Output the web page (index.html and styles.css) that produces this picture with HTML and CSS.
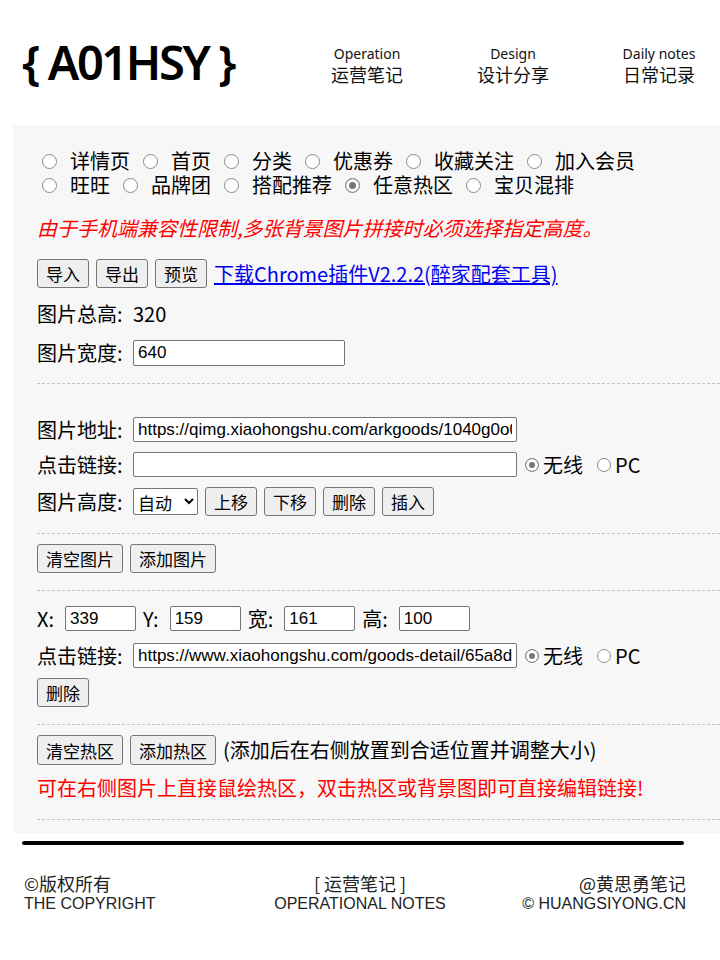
FILE: index.html
```html
<!DOCTYPE html>
<html lang="zh-CN">

<head>
  <meta charset="UTF-8">
  <meta name="viewport" content="width=device-width, initial-scale=1.0">
  <title>A01HSY - 热区工具</title>
  <link rel="stylesheet" href="styles.css">
</head>

<body>
  <header class="top">
    <div class="logo">{ A01HSY }</div>
    <nav class="nav">
      <a href="#"><span class="en">Operation</span><span class="cn">运营笔记</span></a>
      <a href="#"><span class="en">Design</span><span class="cn">设计分享</span></a>
      <a href="#"><span class="en">Daily notes</span><span class="cn">日常记录</span></a>
    </nav>
  </header>

  <main class="panel">
    <div class="types">
      <label class="opt"><input type="radio" name="type">详情页</label>
      <label class="opt"><input type="radio" name="type">首页</label>
      <label class="opt"><input type="radio" name="type">分类</label>
      <label class="opt"><input type="radio" name="type">优惠券</label>
      <label class="opt"><input type="radio" name="type">收藏关注</label>
      <label class="opt"><input type="radio" name="type">加入会员</label>
    </div>
    <div class="types">
      <label class="opt"><input type="radio" name="type">旺旺</label>
      <label class="opt"><input type="radio" name="type">品牌团</label>
      <label class="opt"><input type="radio" name="type">搭配推荐</label>
      <label class="opt"><input type="radio" name="type" checked>任意热区</label>
      <label class="opt"><input type="radio" name="type">宝贝混排</label>
    </div>

    <p class="note">由于手机端兼容性限制,多张背景图片拼接时必须选择指定高度。</p>

    <div class="row tools">
      <button>导入</button>
      <button>导出</button>
      <button>预览</button>
      <a class="plugin" href="#">下载Chrome插件V2.2.2(醉家配套工具)</a>
    </div>

    <div class="row info">
      <span class="label">图片总高:</span><span>320</span>
    </div>
    <div class="row info">
      <span class="label">图片宽度:</span><input class="field short" type="text" value="640">
    </div>

    <hr class="sep">

    <div class="row first">
      <span class="label">图片地址:</span>
      <input class="field" type="text" value="https://qimg.xiaohongshu.com/arkgoods/1040g0o031a2b3c4d5e6">
    </div>
    <div class="row">
      <span class="label">点击链接:</span>
      <input class="field" type="text" value="">
      <label class="mode"><input type="radio" name="m1" checked>无线</label>
      <label class="mode"><input type="radio" name="m1">PC</label>
    </div>
    <div class="row">
      <span class="label">图片高度:</span>
      <select class="pick">
        <option>自动</option>
      </select>
      <div class="btns">
        <button>上移</button>
        <button>下移</button>
        <button>删除</button>
        <button>插入</button>
      </div>
    </div>

    <hr class="sep">

    <div class="row btns">
      <button>清空图片</button>
      <button>添加图片</button>
    </div>

    <hr class="sep">

    <div class="row coords">
      <span>X:</span><input class="field num" type="text" value="339">
      <span>Y:</span><input class="field num" type="text" value="159">
      <span>宽:</span><input class="field num" type="text" value="161">
      <span>高:</span><input class="field num" type="text" value="100">
    </div>
    <div class="row wide">
      <span class="label">点击链接:</span>
      <input class="field" type="text" value="https://www.xiaohongshu.com/goods-detail/65a8d5f3e4b0a1">
      <label class="mode"><input type="radio" name="m2" checked>无线</label>
      <label class="mode"><input type="radio" name="m2">PC</label>
    </div>
    <div class="row">
      <button>删除</button>
    </div>

    <hr class="sep">

    <div class="row btns">
      <button class="tall">清空热区</button>
      <button class="tall">添加热区</button>
      <span>(添加后在右侧放置到合适位置并调整大小)</span>
    </div>
    <p class="tip">可在右侧图片上直接鼠绘热区，双击热区或背景图即可直接编辑链接!</p>

    <hr class="sep last">
  </main>

  <div class="bar"></div>

  <footer class="foot">
    <div class="col">
      <span class="cn">©版权所有</span>
      <span class="en">THE COPYRIGHT</span>
    </div>
    <div class="col mid">
      <span class="cn">[ 运营笔记 ]</span>
      <span class="en">OPERATIONAL NOTES</span>
    </div>
    <div class="col end">
      <span class="cn">@黄思勇笔记</span>
      <span class="en">© HUANGSIYONG.CN</span>
    </div>
  </footer>
</body>

</html>
```

FILE: styles.css
```css
body {
  margin: 0;
  font-family: "Noto Sans CJK SC", sans-serif;
  background: #fff;
  color: #000;
}

/* header */
.top {
  display: flex;
  align-items: center;
  height: 125px;
  padding: 0 1px 0 22px;
}

.logo {
  font-family: "Noto Sans", sans-serif;
  font-size: 47px;
  font-weight: 600;
  letter-spacing: -2.4px;
  line-height: 1;
}

.nav {
  display: flex;
  gap: 26px;
  margin-left: auto;
  margin-top: 5px;
}

.nav a {
  display: flex;
  flex-direction: column;
  align-items: center;
  width: 120px;
  color: #111;
  text-decoration: none;
}

.nav .en {
  font-family: "Noto Sans", sans-serif;
  font-size: 14px;
  line-height: 18px;
}

.nav .cn {
  font-size: 18px;
  line-height: 22px;
}

/* panel */
.panel {
  margin-left: 13px;
  padding: 24px 0 13px 24px;
  background: #f7f7f7;
  font-size: 20px;
  line-height: 24px;
}

.types {
  display: flex;
}

.opt {
  display: inline-flex;
  align-items: center;
  margin-right: 8px;
}

.opt input {
  margin: 0 13px 0 5px;
}

input[type="radio"] {
  appearance: none;
  box-sizing: border-box;
  width: 15px;
  height: 15px;
  border: 1px solid #8a8a8a;
  border-radius: 50%;
  background: #fff;
}

input[type="radio"]:checked {
  background: #777;
  box-shadow: inset 0 0 0 3px #fff;
}

.note {
  margin: 19px 0 0;
  color: #f00;
  font-style: italic;
}

.tip {
  margin: 11px 0 0;
  color: #f00;
}

.row {
  display: flex;
  align-items: center;
  margin-top: 10px;
}

.row.wide {
  margin-top: 12px;
}

.tools {
  gap: 7px;
  margin-top: 19px;
}

.info {
  margin-top: 14px;
}

.first {
  margin-top: 33px;
}

.coords {
  margin-top: 15px;
}

.plugin {
  color: #00e;
}

.label {
  width: 96px;
  flex: none;
}

button {
  box-sizing: border-box;
  height: 29px;
  padding: 0 8px;
  font-family: "Noto Sans CJK SC", sans-serif;
  font-size: 17px;
  line-height: 1;
  color: #000;
  background: #efefef;
  border: 1px solid #767676;
  border-radius: 3px;
}

button.tall {
  height: 30px;
}

.btns {
  display: flex;
  align-items: center;
  gap: 7px;
}

.pick + .btns {
  margin-left: 7px;
}

.field {
  box-sizing: border-box;
  width: 384px;
  height: 25px;
  padding: 0 4px;
  font-family: "Liberation Sans", Arial, sans-serif;
  font-size: 17px;
  color: #000;
  background: #fff;
  border: 1px solid #767676;
  border-radius: 2px;
}

.field.short {
  width: 212px;
  height: 26px;
}

.field.num {
  width: 71px;
  margin: 0 7px 0 11px;
}

.pick {
  box-sizing: border-box;
  width: 65px;
  height: 27px;
  font-family: "Noto Sans CJK SC", sans-serif;
  font-size: 17px;
  background: #fff;
  border: 1px solid #767676;
  border-radius: 2px;
}

.mode {
  display: inline-flex;
  align-items: center;
}

.mode input {
  width: 14px;
  height: 14px;
  margin: 0 4px 0 8px;
}

.mode + .mode input {
  margin-left: 14px;
}

.sep {
  border: 0;
  border-top: 1px dashed #c4c4c4;
  margin: 17px 0 0;
}

.sep.last {
  margin-top: 19px;
}

/* footer */
.bar {
  height: 4px;
  margin: 8px 36px 0 22px;
  background: #000;
  border-radius: 2px;
}

.foot {
  display: grid;
  grid-template-columns: 1fr auto 1fr;
  margin: 27px 34px 0 24px;
  color: #222;
}

.col {
  display: flex;
  flex-direction: column;
}

.col .cn {
  font-size: 18px;
  line-height: 22px;
}

.col .en {
  font-family: "Liberation Sans", Arial, sans-serif;
  font-size: 16px;
  line-height: 20px;
}

.mid {
  align-items: center;
  margin-left: 10px;
}

.end {
  align-items: flex-end;
}
```
